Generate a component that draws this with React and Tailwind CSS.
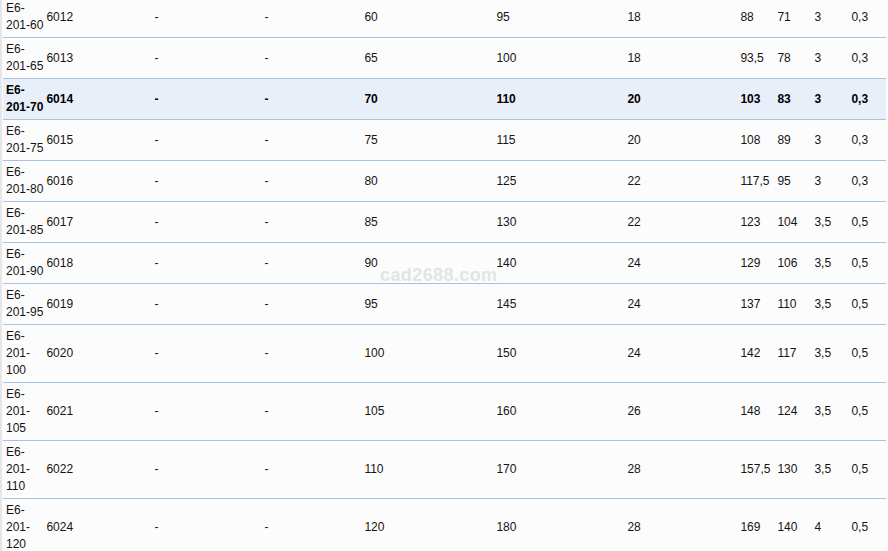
const rows = [
  [['E6-', '201-60'], '6012', '60', '95', '18', '88', '71', '3', '0,3'],
  [['E6-', '201-65'], '6013', '65', '100', '18', '93,5', '78', '3', '0,3'],
  [['E6-', '201-70'], '6014', '70', '110', '20', '103', '83', '3', '0,3', true],
  [['E6-', '201-75'], '6015', '75', '115', '20', '108', '89', '3', '0,3'],
  [['E6-', '201-80'], '6016', '80', '125', '22', '117,5', '95', '3', '0,3'],
  [['E6-', '201-85'], '6017', '85', '130', '22', '123', '104', '3,5', '0,5'],
  [['E6-', '201-90'], '6018', '90', '140', '24', '129', '106', '3,5', '0,5'],
  [['E6-', '201-95'], '6019', '95', '145', '24', '137', '110', '3,5', '0,5'],
  [['E6-', '201-', '100'], '6020', '100', '150', '24', '142', '117', '3,5', '0,5'],
  [['E6-', '201-', '105'], '6021', '105', '160', '26', '148', '124', '3,5', '0,5'],
  [['E6-', '201-', '110'], '6022', '110', '170', '28', '157,5', '130', '3,5', '0,5'],
  [['E6-', '201-', '120'], '6024', '120', '180', '28', '169', '140', '4', '0,5'],
]

const widths = [40, 108, 110, 100, 132, 131, 113, 37, 37, 37, 38]

export default function App() {
  return (
    <div className="relative h-[551px] w-[888px] overflow-hidden bg-[#fcfcfc] font-['Liberation_Sans',Arial,sans-serif] text-[12px] leading-[17px]">
      <div className="absolute left-0 top-0 h-full w-[2px] bg-[#e6e6e6]" />
      <table className="ml-[3px] mt-[-3px] table-fixed border-collapse">
        <colgroup>
          {widths.map((w, i) => (
            <col key={i} style={{ width: w }} />
          ))}
        </colgroup>
        <tbody>
          {rows.map((r) => {
            const hl = r[9] === true
            const cells = [r[0], r[1], '-', '-', r[2], r[3], r[4], r[5], r[6], r[7], r[8]]
            return (
              <tr
                key={r[1]}
                className={`border-b border-[#a6c3e3] ${hl ? 'bg-[#e8eff9] font-bold text-black' : 'text-[#141414]'}`}
              >
                {cells.map((c, i) => (
                  <td key={i} className="whitespace-nowrap py-[3px] pl-[3px] pr-0 align-middle">
                    {i === 0
                      ? c.map((line, j) => (
                          <div key={j}>{line}</div>
                        ))
                      : c}
                  </td>
                ))}
              </tr>
            )
          })}
        </tbody>
      </table>
      <div className="pointer-events-none absolute left-[380px] top-[265px] text-[18px] font-bold leading-[20px] tracking-[0.4px] text-[#e4e4e4]">
        cad2688.com
      </div>
    </div>
  )
}
